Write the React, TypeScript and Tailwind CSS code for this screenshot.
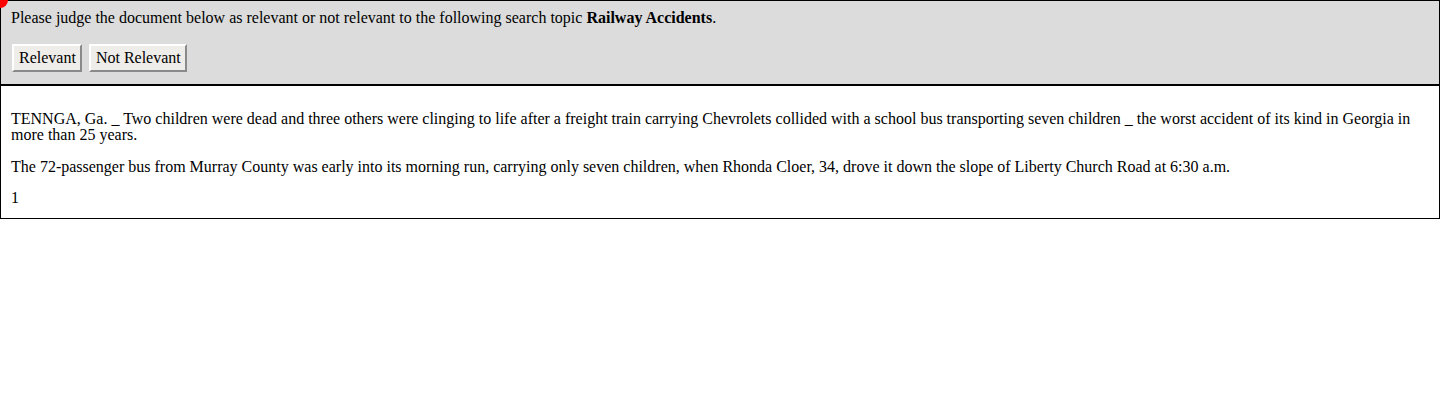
import React from "react";

export default function App() {
  const serif = { fontFamily: '"Liberation Serif", "Times New Roman", serif' };
  return (
    <div className="relative bg-white text-black text-[16px]" style={serif}>
      <div className="absolute -left-2 -top-2 w-4 h-4 rounded-full bg-[#ff0000]" />
      <div className="border border-black bg-[#dcdcdc] pl-[10px] pr-[10px] pt-[8px] pb-[12px]">
        <p className="leading-[18px]">
          Please judge the document below as relevant or not relevant to the following search topic{" "}
          <b>Railway Accidents</b>.
        </p>
        <div className="mt-[17px] flex gap-[7px] pl-[1px]">
          <button
            className="h-[28px] pl-[5px] pr-[4px] bg-[#efede9] border-2 border-t-[#ffffff] border-l-[#ffffff] border-r-[#8a8a8a] border-b-[#8a8a8a] leading-[18px]"
            style={serif}
          >
            Relevant
          </button>
          <button
            className="h-[28px] pl-[5px] pr-[4px] bg-[#efede9] border-2 border-t-[#ffffff] border-l-[#ffffff] border-r-[#8a8a8a] border-b-[#8a8a8a] leading-[18px]"
            style={serif}
          >
            Not Relevant
          </button>
        </div>
      </div>
      <div className="border border-black bg-white pl-[10px] pr-[10px] pt-[25px] pb-[12px] leading-[16px]">
        <p>
          TENNGA, Ga. _ Two children were dead and three others were clinging to life after a freight train carrying
          Chevrolets collided with a school bus transporting seven children _ the worst accident of its kind in Georgia in
          more than 25 years.
        </p>
        <p className="mt-[16px]">
          The 72-passenger bus from Murray County was early into its morning run, carrying only seven children, when
          Rhonda Cloer, 34, drove it down the slope of Liberty Church Road at 6:30 a.m.
        </p>
        <p className="mt-[15px]">1</p>
      </div>
    </div>
  );
}
